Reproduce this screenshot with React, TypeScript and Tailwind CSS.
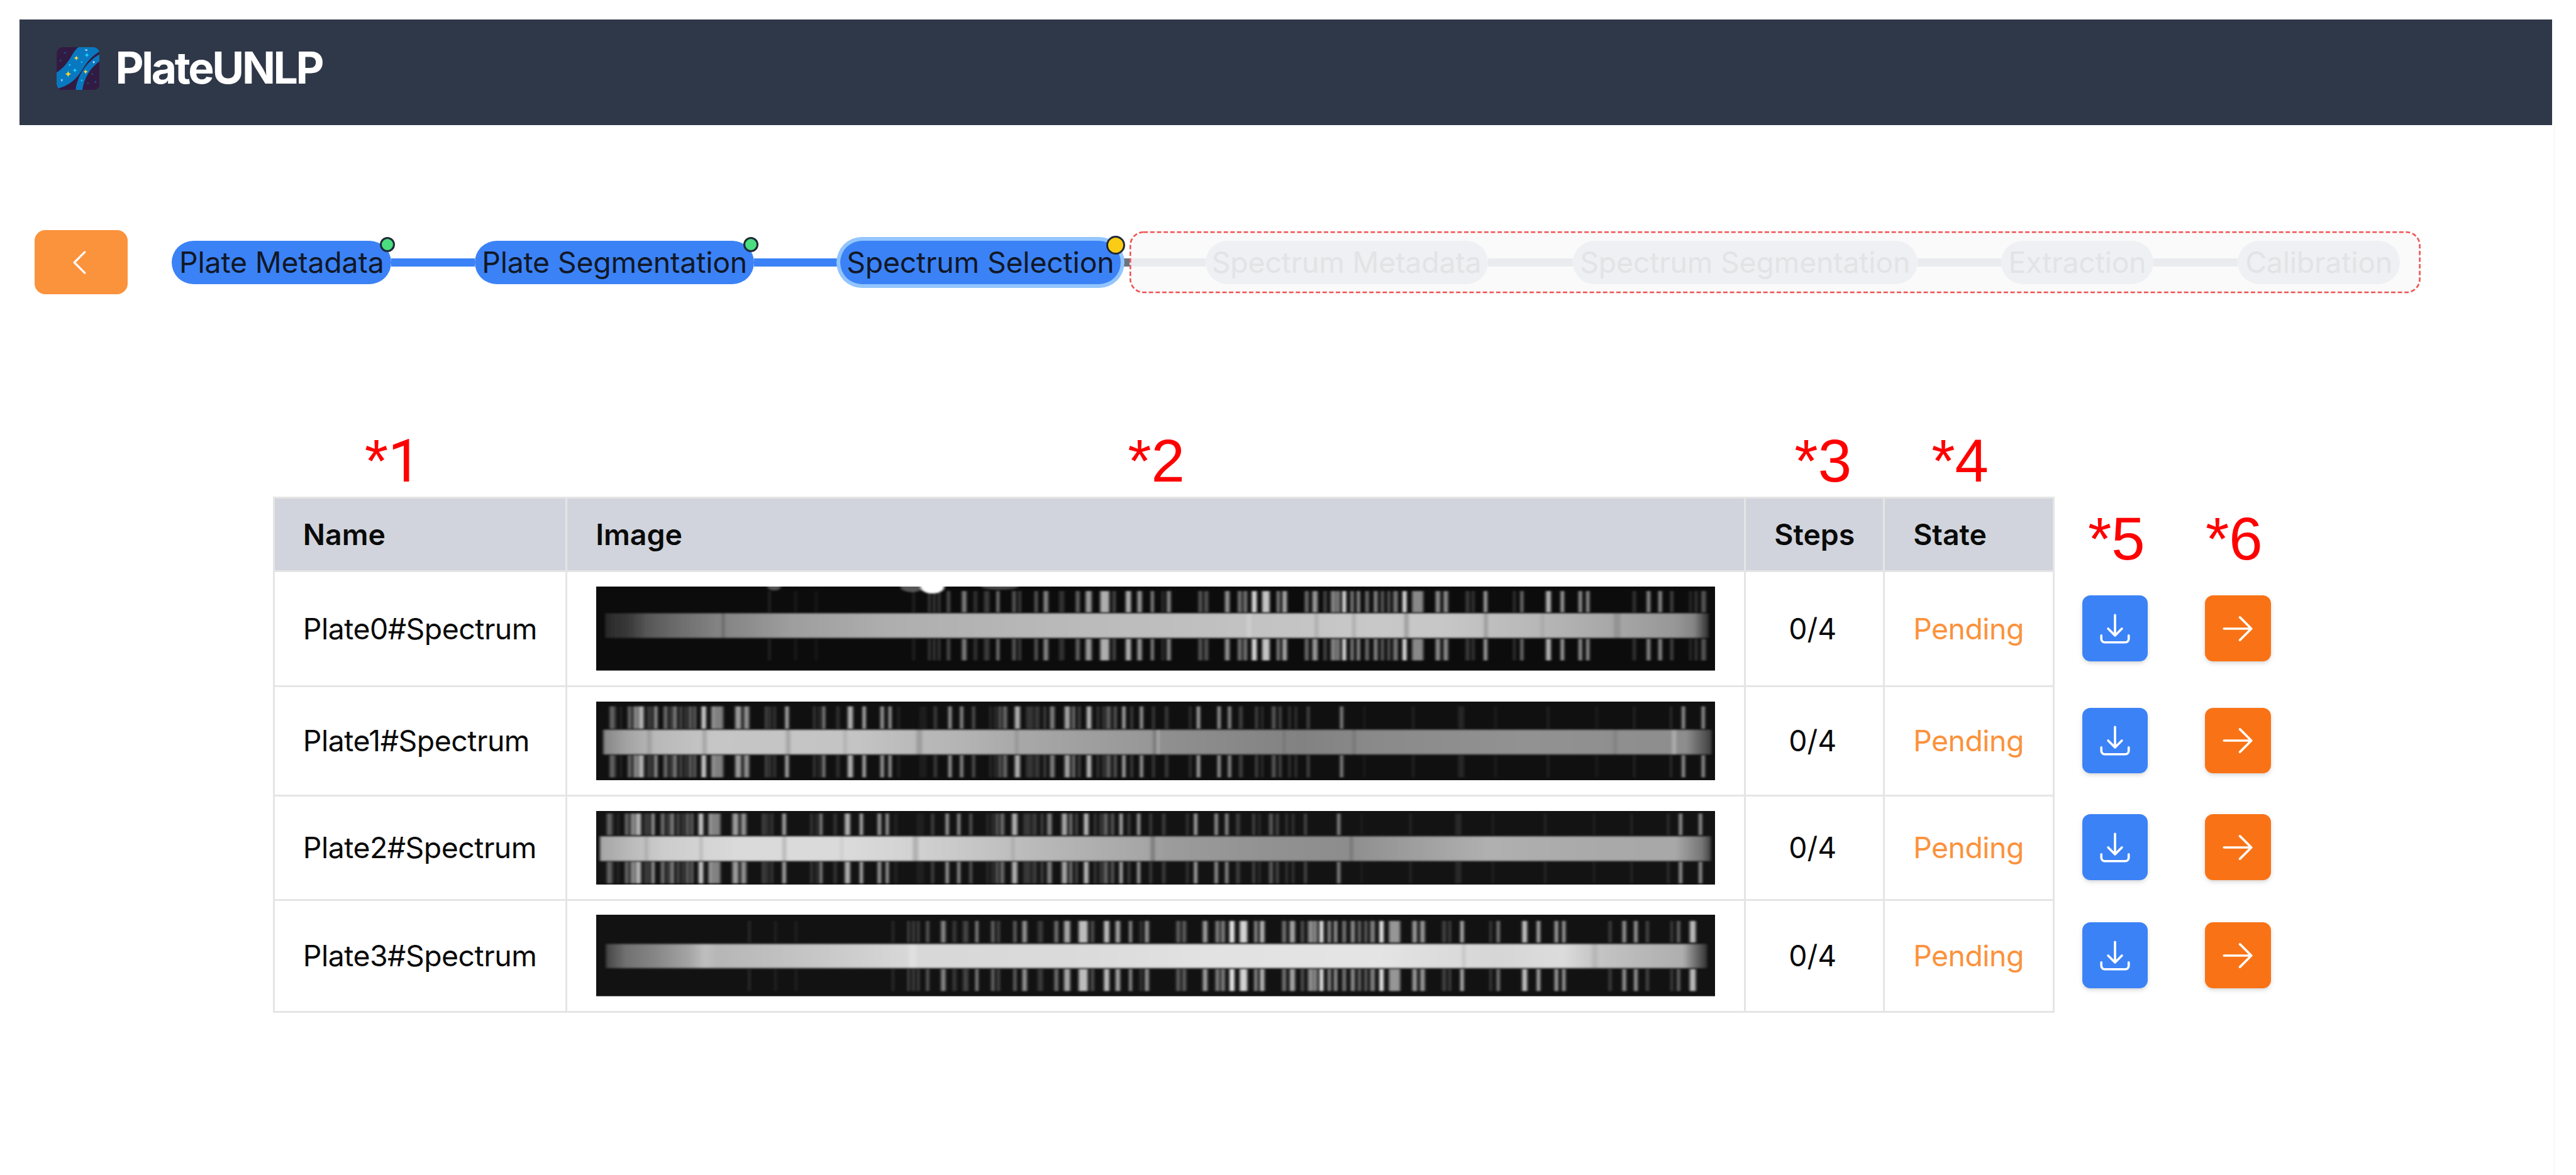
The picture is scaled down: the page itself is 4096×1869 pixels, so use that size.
import React from "react";

type Line = [x: number, width: number, level: number];
type Stop = [x: number, color: string];
type Mark = [x: number, width: number, color: string, opacity: number];

const LAMP_A: Line[] = [
  [462, 6, 25], [532, 5, 20], [587, 5, 18], [847, 5, 30], [889, 5, 60], [902, 5, 60], [915, 5, 60], [940, 8, 65],
  [982, 12, 105], [1012, 10, 35], [1042, 14, 45], [1072, 7, 115], [1115, 9, 75], [1130, 6, 60], [1174, 8, 75],
  [1200, 12, 115], [1242, 14, 35], [1285, 10, 85], [1314, 16, 130], [1357, 24, 150], [1382, 8, 60], [1420, 14, 150],
  [1450, 12, 130], [1484, 7, 130], [1512, 6, 40], [1528, 10, 120], [1612, 10, 70], [1628, 10, 70], [1684, 12, 125],
  [1717, 10, 100], [1732, 10, 100], [1756, 13, 190], [1787, 20, 170], [1820, 8, 115], [1837, 12, 145], [1896, 10, 90],
  [1918, 14, 130], [1945, 8, 60], [1967, 14, 110], [1980, 8, 120], [1996, 10, 200], [2017, 8, 115], [2034, 8, 130],
  [2057, 10, 90], [2080, 10, 115], [2098, 8, 80], [2115, 6, 90], [2133, 12, 100], [2157, 11, 195], [2192, 30, 115],
  [2246, 12, 120], [2267, 12, 120], [2325, 10, 45], [2340, 6, 50], [2373, 9, 145], [2450, 5, 50], [2470, 8, 100],
  [2541, 13, 155], [2578, 9, 140], [2626, 9, 130], [2646, 8, 135], [2770, 8, 40], [2808, 9, 125], [2839, 9, 125],
];
const LAMP_A_EDGE: Line[] = [[2870, 7, 60], [2920, 4, 50], [2935, 5, 60], [2955, 12, 70]];
const LAMP_A_SHIFTED: Line[] = [
  ...LAMP_A.map(([x, w, l]): Line => [x - 51 - x * 0.0049, w, Math.min(215, l * 1.08)]),
  [2805, 7, 60], [2870, 5, 60], [2888, 8, 85], [2926, 16, 160],
];

const LAMP_B: Line[] = [
  [42, 12, 80], [51, 4, 50], [66, 5, 25], [89, 9, 90], [105, 12, 115], [120, 14, 155], [139, 5, 60], [147, 5, 60],
  [159, 8, 135], [185, 10, 90], [199, 5, 60], [210, 10, 105], [226, 6, 70], [239, 5, 60], [251, 8, 85], [263, 7, 85],
  [287, 12, 175], [310, 8, 70], [324, 30, 105], [379, 16, 130], [401, 14, 120], [454, 8, 50], [464, 5, 50],
  [476, 6, 45], [509, 9, 150], [582, 5, 50], [595, 4, 45], [607, 8, 110], [645, 8, 35], [678, 14, 150], [715, 8, 160],
  [763, 9, 135], [784, 7, 150], [807, 5, 25], [872, 20, 12], [905, 7, 50], [944, 8, 140], [975, 8, 125], [1007, 7, 70],
  [1052, 4, 40], [1065, 4, 50], [1077, 8, 70], [1091, 10, 90], [1124, 14, 150], [1157, 20, 35], [1177, 12, 40],
  [1197, 6, 55], [1217, 12, 105], [1257, 14, 140], [1274, 6, 120], [1289, 5, 70], [1315, 12, 160], [1339, 5, 50],
  [1354, 5, 55], [1367, 12, 75], [1385, 8, 70], [1408, 8, 155], [1429, 5, 60], [1455, 8, 140], [1487, 6, 50],
  [1522, 8, 45], [1585, 5, 45], [1607, 8, 155], [1662, 8, 135], [1690, 8, 125], [1720, 10, 45], [1762, 6, 60],
  [1777, 4, 45], [1808, 10, 70], [1825, 6, 65], [1850, 5, 45], [1867, 5, 45], [1900, 6, 65], [1989, 8, 115],
  [2050, 5, 15], [2180, 6, 20], [2308, 16, 22], [2400, 6, 15], [2540, 6, 20], [2670, 6, 15], [2770, 6, 20],
  [2868, 5, 35], [2901, 8, 135], [2954, 8, 130],
];
const LAMP_B_SHIFTED: Line[] = LAMP_B.map(([x, w, l]) => [x - 7.5, w, l]);

interface Spectrum {
  id: number;
  height: number;
  viewHeight: number;
  rowClass: string;
  background: string;
  lamp: Line[];
  lampTop: [number, number];
  lampBottom: [number, number];
  band: [top: number, bottom: number, start: number, end: number];
  stops: Stop[];
  marks: Mark[];
  blobs?: [x: number, rx: number, ry: number, opacity: number][];
}

const SPECTRA: Spectrum[] = [
  {
    id: 0, height: 133.6, viewHeight: 299, rowClass: "h-[182.9px]", background: "#0c0c0c",
    lamp: [...LAMP_A, ...LAMP_A_EDGE], lampTop: [16, 92], lampBottom: [186, 263], band: [95, 183, 24, 2968],
    stops: [[24, "#292929"], [87, "#393939"], [137, "#575757"], [207, "#6a6a6a"], [317, "#828282"], [400, "#8c8c8c"],
      [517, "#9e9e9e"], [777, "#aeaeae"], [1277, "#bababa"], [1730, "#c2c2c2"], [2080, "#c8c8c8"], [2280, "#c6c6c6"],
      [2400, "#bebebe"], [2530, "#b6b6b6"], [2730, "#a6a6a6"], [2880, "#979797"], [2930, "#858585"], [2968, "#303030"]],
    marks: [[339, 8, "#000", 0.2], [1742, 12, "#fff", 0.2], [1922, 10, "#000", 0.1], [2022, 8, "#000", 0.14],
      [2162, 12, "#000", 0.19], [2374, 11, "#000", 0.17], [2525, 8, "#000", 0.08], [2724, 18, "#000", 0.11]],
    blobs: [[475, 18, 14, 0.3], [842, 30, 20, 0.3], [897, 32, 25, 1], [1077, 50, 11, 0.25]],
  },
  {
    id: 1, height: 125.2, viewHeight: 280, rowClass: "h-[173.7px]", background: "#101010",
    lamp: LAMP_B, lampTop: [17, 97], lampBottom: [190, 270], band: [100, 188, 19, 2976],
    stops: [[19, "#858585"], [77, "#a2a2a2"], [157, "#b8b8b8"], [307, "#c6c6c6"], [700, "#c4c4c4"], [860, "#b9b9b9"],
      [980, "#b4b4b4"], [1130, "#a8a8a8"], [1477, "#979797"], [1510, "#909090"], [1880, "#828282"], [2080, "#8a8a8a"],
      [2480, "#929292"], [2910, "#8d8d8d"], [2976, "#404040"]],
    marks: [[142, 12, "#000", 0.11], [289, 12, "#000", 0.14], [512, 12, "#000", 0.15], [664, 8, "#000", 0.1],
      [862, 16, "#000", 0.14], [1122, 8, "#000", 0.11], [1490, 8, "#000", 0.2], [1499, 5, "#fff", 0.28],
      [1836, 6, "#000", 0.12], [2022, 8, "#000", 0.13], [2719, 12, "#000", 0.07], [2876, 11, "#fff", 0.28]],
  },
  {
    id: 2, height: 117.1, viewHeight: 262, rowClass: "h-[165.9px]", background: "#131313",
    lamp: LAMP_B_SHIFTED, lampTop: [9, 86], lampBottom: [180, 258], band: [90, 178, 10, 2974],
    stops: [[10, "#a5a5a5"], [97, "#bbbbbb"], [177, "#cccccc"], [377, "#dadada"], [677, "#dadada"], [840, "#d2d2d2"],
      [977, "#c8c8c8"], [1177, "#b9b9b9"], [1477, "#a5a5a5"], [1520, "#9c9c9c"], [1780, "#929292"], [2000, "#8d8d8d"],
      [2180, "#9e9e9e"], [2380, "#b0b0b0"], [2680, "#a9a9a9"], [2880, "#a8a8a8"], [2950, "#777777"], [2974, "#444444"]],
    marks: [[134, 10, "#000", 0.1], [280, 9, "#000", 0.11], [502, 11, "#000", 0.14], [655, 8, "#000", 0.05],
      [852, 15, "#000", 0.15], [1112, 10, "#000", 0.08], [1485, 12, "#000", 0.23], [2015, 9, "#000", 0.15]],
  },
  {
    id: 3, height: 129.6, viewHeight: 290, rowClass: "h-[178.3px]", background: "#121212",
    lamp: LAMP_A_SHIFTED, lampTop: [22, 99], lampBottom: [193, 272], band: [104, 190, 26, 2964],
    stops: [[26, "#444444"], [77, "#707070"], [157, "#868686"], [247, "#a4a4a4"], [290, "#bebebe"], [325, "#b6b6b6"],
      [577, "#c6c6c6"], [837, "#d8d8d8"], [1277, "#dadada"], [1580, "#e1e1e1"], [2080, "#e4e4e4"], [2400, "#d6d6d6"],
      [2580, "#dcdcdc"], [2660, "#c6c6c6"], [2780, "#b9b9b9"], [2900, "#aeaeae"], [2964, "#333333"]],
    marks: [[844, 20, "#fff", 0.22], [2315, 10, "#000", 0.08], [2664, 16, "#000", 0.07]],
  },
];

const VIEW_WIDTH = 2986;

function SpectrumImage({ s }: { s: Spectrum }) {
  const [top, bottom, start, end] = s.band;
  const id = `spectrum-${s.id}`;
  return (
    <svg
      width="1779.3"
      height={s.height}
      viewBox={`0 0 ${VIEW_WIDTH} ${s.viewHeight}`}
      preserveAspectRatio="none"
      className="block shrink-0"
    >
      <defs>
        <linearGradient id={`${id}-band`} gradientUnits="userSpaceOnUse" x1={0} y1={0} x2={VIEW_WIDTH} y2={0}>
          {s.stops.map(([x, color]) => (
            <stop key={x} offset={x / VIEW_WIDTH} stopColor={color} />
          ))}
        </linearGradient>
        <filter id={`${id}-soft`} filterUnits="userSpaceOnUse" x={0} y={0} width={VIEW_WIDTH} height={s.viewHeight}>
          <feGaussianBlur stdDeviation="3.4 3" />
        </filter>
      </defs>
      <rect width={VIEW_WIDTH} height={s.viewHeight} fill={s.background} />
      <g filter={`url(#${id}-soft)`}>
        {s.lamp.map(([x, w, level]) => {
          const props = { x: x - w / 2, width: w, fill: "#fff", opacity: Math.min(1, (level * 1.14) / 255) };
          return (
            <React.Fragment key={x}>
              <rect {...props} y={s.lampTop[0]} height={s.lampTop[1] - s.lampTop[0]} />
              <rect {...props} y={s.lampBottom[0]} height={s.lampBottom[1] - s.lampBottom[0]} />
            </React.Fragment>
          );
        })}
        {s.blobs?.map(([x, rx, ry, opacity]) => (
          <ellipse key={x} cx={x} cy={0} rx={rx} ry={ry} fill="#fff" opacity={opacity} />
        ))}
      </g>
      <g filter={`url(#${id}-soft)`}>
        <rect x={start} y={top} width={end - start} height={bottom - top} fill={`url(#${id}-band)`} />
        {s.marks.map(([x, w, fill, opacity]) => (
          <rect key={x} x={x - w / 2} y={top} width={w} height={bottom - top} fill={fill} opacity={opacity} />
        ))}
      </g>
    </svg>
  );
}

function Icon({ d, className = "h-[58px] w-[58px]" }: { d: string; className?: string }) {
  return (
    <svg
      viewBox="0 0 24 24"
      fill="none"
      stroke="currentColor"
      strokeWidth="1.5"
      strokeLinecap="round"
      strokeLinejoin="round"
      className={className}
    >
      <path d={d} />
    </svg>
  );
}

const CHEVRON_LEFT = "M15.75 19.5 8.25 12l7.5-7.5";
const ARROW_RIGHT = "M13.5 4.5 21 12m0 0-7.5 7.5M21 12H3";
const DOWNLOAD =
  "M3 16.5v2.25A2.25 2.25 0 0 0 5.25 21h13.5A2.25 2.25 0 0 0 21 18.75V16.5M16.5 12 12 16.5m0 0L7.5 12m4.5 4.5V3";

function Sparkle({ x, y, r, fill }: { x: number; y: number; r: number; fill: string }) {
  const k = r * 0.3;
  return (
    <path
      fill={fill}
      d={`M${x} ${y - r}L${x + k} ${y - k}L${x + r} ${y}L${x + k} ${y + k}L${x} ${y + r}L${x - k} ${y + k}L${x - r} ${y}L${x - k} ${y - k}Z`}
    />
  );
}

function Logo() {
  return (
    <svg width="68.4" height="68.4" viewBox="0 0 264 264" className="shrink-0">
      <defs>
        <clipPath id="logo-clip">
          <rect width="264" height="264" rx="38" />
        </clipPath>
      </defs>
      <g clipPath="url(#logo-clip)">
        <rect width="264" height="264" fill="#321b42" />
        <path
          d="M136 0H264V26C215 56 188 90 160 135C125 190 85 235 0 256V155C45 128 68 92 92 54C106 30 118 10 136 0Z"
          fill="#0879c0"
        />
        <path d="M264 44V86C205 130 168 190 158 264H117C125 175 190 85 264 44Z" fill="#0879c0" />
        <Sparkle x={121} y={67} r={15} fill="#ffd84a" />
        <Sparkle x={71} y={165} r={18} fill="#ffd42e" />
        <Sparkle x={178} y={151} r={14} fill="#ffd84a" />
        <Sparkle x={186} y={49} r={14} fill="#22d3fa" />
        <Sparkle x={112} y={142} r={14} fill="#22d3fa" />
        <circle cx="154" cy="92" r="5.5" fill="#1fc3f0" />
        <circle cx="80" cy="109" r="5.5" fill="#1fc3f0" />
        <circle cx="154" cy="204" r="6" fill="#1fb8ea" />
        <ellipse cx="182" cy="18" rx="8" ry="5" fill="#9fc8ea" />
        <circle cx="228" cy="92" r="6" fill="#d5e6f5" />
        <ellipse cx="32" cy="203" rx="6" ry="8" fill="#86bfe6" />
        <circle cx="23" cy="83" r="5" fill="#17588f" />
        <ellipse cx="52" cy="35" rx="8" ry="4" fill="#17588f" />
        <circle cx="219" cy="165" r="5" fill="#17588f" />
        <ellipse cx="192" cy="222" rx="7" ry="4" fill="#17588f" />
        <circle cx="238" cy="213" r="6" fill="#1d4a7c" />
      </g>
    </svg>
  );
}

function Step({ label, className, children }: { label: string; className: string; children?: React.ReactNode }) {
  return (
    <div
      className={`relative flex h-[68.3px] shrink-0 items-center justify-center rounded-full tracking-[-0.004em] whitespace-nowrap ${className}`}
    >
      {label}
      {children}
    </div>
  );
}

function Link({ className }: { className: string }) {
  return <div className={`h-[13px] shrink-0 ${className}`} />;
}

function Note({ children, className }: { children: React.ReactNode; className: string }) {
  return (
    <div
      className={`shrink-0 font-['Liberation_Sans',Arial,sans-serif] text-[96px] leading-[97px] text-[#ff0000] ${className}`}
    >
      {children}
    </div>
  );
}

const DONE = "bg-[#3b82f6] text-[#111827]";
const LOCKED = "bg-[#eff0f3] text-[#e3e3e6]";
const CELL = "flex shrink-0 items-center border-r-[3px] border-b-[3px] border-[#e5e5e5]";
const BODY = "tracking-[-0.011em]";
const HEAD = "border-t-[3px] bg-[#d1d4dc] font-semibold";
const ACTION =
  "flex h-[104.5px] w-[104.5px] shrink-0 items-center justify-center rounded-[13px] text-white shadow-[0_3px_9px_rgba(0,0,0,0.1),0_3px_6px_-2px_rgba(0,0,0,0.1)]";

export default function App() {
  return (
    <div className="flex h-[1869px] w-[4096px] flex-col overflow-hidden bg-white pt-[31px] pl-[31px] font-['Inter',sans-serif] text-[46.4px] leading-none text-[#0a0a0a]">
      <header className="flex h-[167.5px] w-[4027px] shrink-0 items-start bg-[#2f3848] pt-[43.5px] pl-[59px]">
        <Logo />
        <h1 className="ml-[25px] flex h-[68px] items-center text-[69.6px] font-bold tracking-[-0.048em] text-white">
          PlateUNLP
        </h1>
      </header>

      <main className="flex w-[4032px] flex-1 flex-col border-r-[3px] border-[#fafafa]">
        <nav className="mt-[167.7px] flex h-[102.6px] shrink-0 items-center pl-[23.5px]">
          <button className="mr-[70px] flex h-[102px] w-[148.6px] shrink-0 items-center justify-center rounded-[17px] bg-[#fb923c] text-white">
            <Icon d={CHEVRON_LEFT} className="mr-[5px] h-[53px] w-[53px]" />
          </button>
          <Step label="Plate Metadata" className={`w-[349.4px] ${DONE}`}>
            <span className="absolute -top-[6.5px] -right-[6px] h-[24px] w-[24px] rounded-full border-[3px] border-[#1f2937] bg-[#4ade80]" />
          </Step>
          <Link className="w-[132.6px] bg-[#3b82f6]" />
          <Step label="Plate Segmentation" className={`w-[444.1px] ${DONE}`}>
            <span className="absolute -top-[6.5px] -right-[7px] h-[24px] w-[24px] rounded-full border-[3px] border-[#1f2937] bg-[#4ade80]" />
          </Step>
          <Link className="w-[136.6px] bg-[#3b82f6]" />
          <Step label="Spectrum Selection" className={`z-10 w-[446.1px] ring-[6px] ring-[#93c5fd] ${DONE}`}>
            <span className="absolute -top-[8px] -right-[7.6px] h-[30px] w-[30px] rounded-full border-[3px] border-[#1f2937] bg-[#facc15]" />
          </Step>
          <Link className="w-[14.6px] bg-[#6b7280]" />
          <div className="relative flex h-[98.3px] w-[2052.9px] shrink-0 items-center rounded-[21px] bg-[#fafafa]">
            <Link className="w-[120.1px] bg-[#eaebef]" />
            <Step label="Spectrum Metadata" className={`w-[449.1px] ${LOCKED}`} />
            <Link className="w-[135px] bg-[#eaebef]" />
            <Step label="Spectrum Segmentation" className={`w-[548.2px] ${LOCKED}`} />
            <Link className="w-[133px] bg-[#eaebef]" />
            <Step label="Extraction" className={`w-[242.4px] ${LOCKED}`} />
            <Link className="w-[133.9px] bg-[#eaebef]" />
            <Step label="Calibration" className={`w-[258px] ${LOCKED}`} />
            <svg className="absolute inset-0 h-full w-full" viewBox="0 0 2052.9 98.3">
              <rect
                x="1.3"
                y="1.3"
                width="2050.3"
                height="95.7"
                rx="21"
                fill="none"
                stroke="#f05252"
                strokeWidth="2.6"
                strokeDasharray="6.9 3.72"
              />
            </svg>
          </div>
        </nav>

        <section className="mt-[215px] flex shrink-0 flex-col pl-[402.8px]">
          <div className="flex h-[106.2px]">
            <Note className="w-[466.4px] pl-[145.9px]">
              *<span className="font-['Roboto',sans-serif] text-[94px] leading-none">1</span>
            </Note>
            <Note className="w-[1874.6px] pl-[893px]">*2</Note>
            <Note className="w-[220.9px] pl-[78.5px]">*3</Note>
            <Note className="w-[269.8px] pl-[75.5px]">*4</Note>
          </div>

          <div className="flex h-[120.1px]">
            <div className={`w-[467.9px] border-l-[3px] pl-[45px] ${CELL} ${HEAD}`}>Name</div>
            <div className={`w-[1874.6px] pl-[45.5px] ${CELL} ${HEAD}`}>Image</div>
            <div className={`w-[220.9px] pl-[45px] ${CELL} ${HEAD}`}>Steps</div>
            <div className={`w-[269.8px] pl-[45px] ${CELL} ${HEAD}`}>State</div>
            <Note className="mt-[18px] w-[187px] pl-[53px]">*5</Note>
            <Note className="mt-[18px] pl-[53px]">*6</Note>
          </div>

          {SPECTRA.map((s) => (
            <div key={s.id} className={`flex shrink-0 items-stretch ${s.rowClass}`}>
              <div className={`w-[467.9px] border-l-[3px] pl-[45px] ${CELL} ${BODY}`}>{`Plate${s.id}#Spectrum`}</div>
              <div className={`w-[1874.6px] pl-[46.5px] ${CELL}`}>
                <SpectrumImage s={s} />
              </div>
              <div className={`w-[220.9px] justify-center pr-[6px] ${CELL}`}>0/4</div>
              <div className={`w-[269.8px] pl-[45px] text-[#fb923c] ${CELL} ${BODY}`}>Pending</div>
              <div className="flex items-center gap-[90.8px] pb-[4px] pl-[43.8px]">
                <button className={`bg-[#3b82f6] ${ACTION}`}>
                  <Icon d={DOWNLOAD} />
                </button>
                <button className={`bg-[#f97316] ${ACTION}`}>
                  <Icon d={ARROW_RIGHT} />
                </button>
              </div>
            </div>
          ))}
        </section>
      </main>
    </div>
  );
}
